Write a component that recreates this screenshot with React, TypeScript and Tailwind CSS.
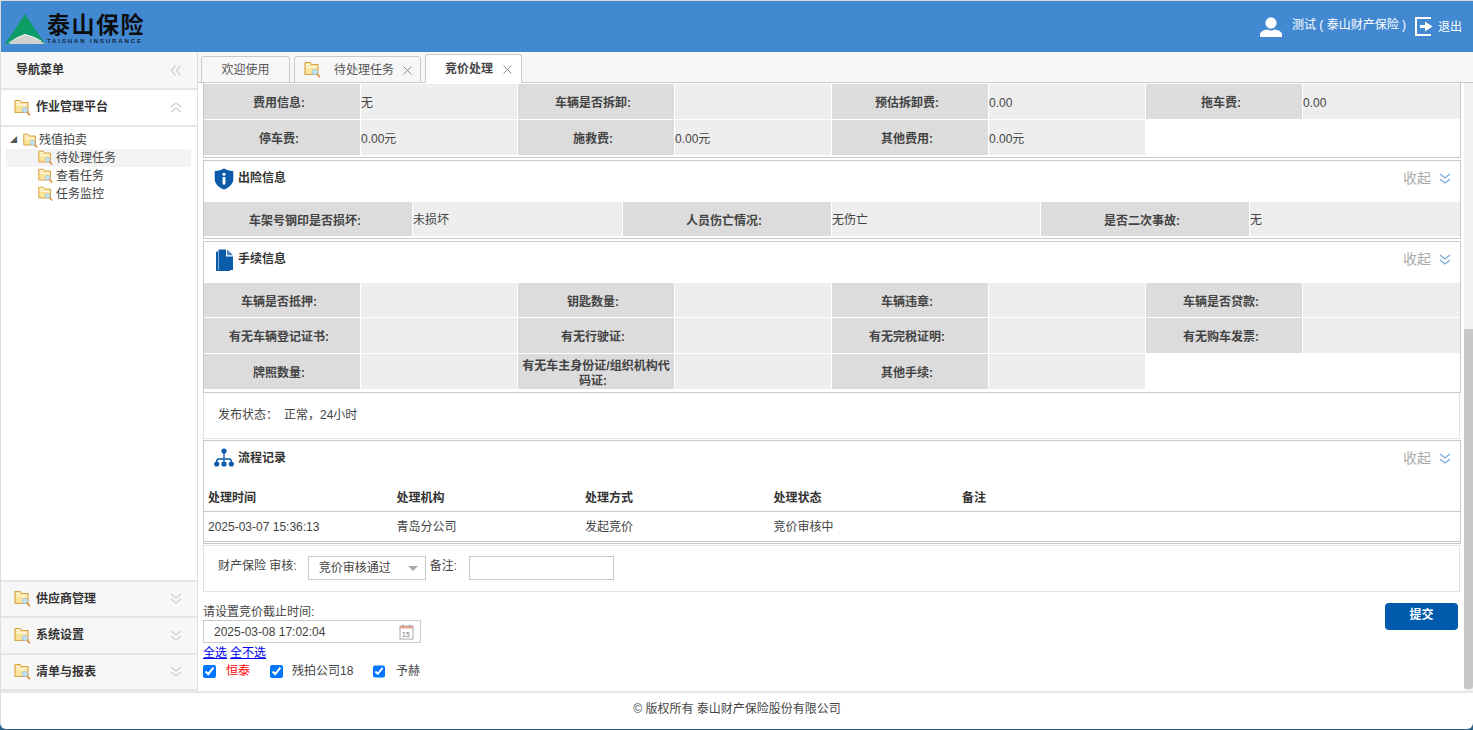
import { X } from 'lucide-react';

const cjk = '"Liberation Sans","Noto Sans CJK SC",sans-serif';

const FolderIcon = ({ className = '' }: { className?: string }) => (
  <svg viewBox="0 0 17 17" className={`w-[17px] h-[17px] shrink-0 ${className}`}>
    <path d="M1 1.500h5l1.500 2H14v10H1z" fill="#fbe39a" stroke="#d9a24a" strokeWidth="1.100" />
    <path d="M2 3.500h4M2.200 6h10.600" stroke="#fff" strokeWidth="1" />
    <circle cx="10.800" cy="11" r="2.700" fill="#bfe3f5" stroke="#a8c2cc" strokeWidth="0.800" />
    <path d="M13 13.200l3 3" stroke="#d98a2b" strokeWidth="1.500" />
  </svg>
);

const Chevrons = ({ dir = 'down', className = '' }: { dir?: 'down' | 'up' | 'left'; className?: string }) => (
  <svg viewBox="0 0 12 11" className={`w-[12px] h-[11px] shrink-0 ${dir === 'up' ? 'rotate-180' : dir === 'left' ? 'rotate-90' : ''} ${className}`}>
    <path d="M1 1l5 4 5-4M1 6l5 4 5-4" fill="none" stroke="currentColor" strokeWidth="1.200" />
  </svg>
);

const ShieldIcon = () => (
  <svg viewBox="0 0 20 22" className="w-[20px] h-[22px]">
    <path d="M10 0.500c2.500 1.600 5.500 2.400 9.300 2.400v8c0 4.800-3.600 8.200-9.300 10.600C4.300 19.100.7 15.700.7 10.900v-8C4.500 2.900 7.500 2.100 10 .5z" fill="#0a5ba8" />
    <rect x="8.600" y="5" width="2.800" height="2.600" fill="#fff" />
    <rect x="8.600" y="9" width="2.800" height="7.500" fill="#fff" />
  </svg>
);

const DocIcon = () => (
  <svg viewBox="0 0 19 23" className="w-[19px] h-[23px]">
    <path d="M2 2.500h1V21h12v1H1V3z" fill="#0a5ba8" />
    <path d="M3.500 0.500H11v7h7V21H3.500z" fill="#0a5ba8" />
    <path d="M12.200 0.500L18 6.300h-5.800z" fill="#3f83c4" />
  </svg>
);

const TreeIcon = () => (
  <svg viewBox="0 0 20 19" className="w-[20px] h-[19px]">
    <g fill="#0a5ba8">
      <circle cx="10" cy="3" r="2.600" />
      <circle cx="2.700" cy="16" r="2.600" />
      <circle cx="10" cy="16" r="2.600" />
      <circle cx="17.300" cy="16" r="2.600" />
    </g>
    <path d="M10 3v13M2.700 16v-2.500q0-2.500 2.500-2.500h9.600q2.500 0 2.500 2.500V16" fill="none" stroke="#0a5ba8" strokeWidth="1.300" />
  </svg>
);

const UserIcon = () => (
  <svg viewBox="0 0 22 20" className="w-[22px] h-[20px]">
    <ellipse cx="11" cy="6" rx="5.600" ry="5.800" fill="#fff" />
    <path d="M0 20v-2.500c0-3 4-4.500 7.500-5 2 1.500 5 1.500 7 0 3.500.5 7.500 2 7.500 5V20z" fill="#fff" />
  </svg>
);

const LogoutIcon = () => (
  <svg viewBox="0 0 18 19" className="w-[18px] h-[19px]">
    <path d="M16 1H1v17h15" fill="none" stroke="#fff" strokeWidth="2" />
    <path d="M5 8h5V4.500L17.500 9.500 10 14.500V11H5z" fill="#fff" />
  </svg>
);

const CalendarIcon = () => (
  <svg viewBox="0 0 15 16" className="w-[15px] h-[16px]">
    <rect x="1" y="2" width="13" height="13" fill="#fff" stroke="#aaa" />
    <path d="M1 2h13v2.500H1z" fill="#e9a48f" />
    <path d="M4 0.500v3M11 0.500v3" stroke="#999" />
    <text x="3" y="12.500" fontSize="7" fill="#777" fontFamily="Liberation Sans">15</text>
  </svg>
);

const Cell = ({ label, value, kind }: { label?: string; value?: string; kind: 'l' | 'v' }) =>
  kind === 'l' ? (
    <div className="bg-[#dcdcdc] pt-[4px] px-[4px] flex items-center justify-center text-center font-bold text-[#444] leading-[15px]">
      <span>
        {label}
        <span className="inline-block w-[6px]" />
      </span>
    </div>
  ) : (
    <div className="bg-[#eeeeee] pt-[2px] flex items-center text-[#444]">{value}</div>
  );

const FourCols = ({ rows, shortFirst }: { rows: [string, string][][]; shortFirst?: boolean }) => (
  <div className="flex flex-col gap-[1px]">
    {rows.map((row, i) => (
      <div key={i} className={`grid grid-cols-[156px_156px_156px_156px_156px_156px_156px_157px] gap-x-[1px] ${shortFirst && i === 0 ? 'h-[34px]' : 'h-[35px]'}`}>
        {row.map(([l, v], j) => [
          <Cell key={`l${j}`} kind="l" label={l} />,
          <Cell key={`v${j}`} kind="v" value={v} />,
        ])}
      </div>
    ))}
  </div>
);

const SectionHead = ({ icon, title, h }: { icon: React.ReactNode; title: string; h: string }) => (
  <div className={`flex items-start ${h}`}>
    <div className="w-[20px] ml-[10px] mt-[7px] flex justify-center">{icon}</div>
    <span className="ml-[4px] mt-[8px] font-bold text-[#333] leading-[18px]">{title}</span>
    <div className="ml-auto mr-[9px] mt-[7px] flex items-center gap-[8px]">
      <span className="text-[14px] text-[#aaaaaa] leading-[20px]">收起</span>
      <Chevrons className="text-[#78a6da]" />
    </div>
  </div>
);

const NavHead = ({ title, bg = 'bg-[#f7f7f7]', open }: { title: string; bg?: string; open?: boolean }) => (
  <div className={`h-[36.5px] flex items-center border-b-2 border-[#e4e6e8] pl-[13px] pr-[15px] ${bg}`}>
    <FolderIcon />
    <span className="ml-[5px] font-bold text-[#333] text-[12px]">{title}</span>
    <Chevrons dir={open ? 'up' : 'down'} className="ml-auto text-[#cfcfcf]" />
  </div>
);

const TreeRow = ({ title, active }: { title: string; active?: boolean }) => (
  <div className={`h-[18px] flex items-center pl-[31px] ${active ? 'bg-[#f3f3f3]' : ''}`}>
    <FolderIcon className="scale-90" />
    <span className="ml-[2px] text-[#444]">{title}</span>
  </div>
);

export default function App() {
  return (
    <div className="h-screen w-full bg-[#2e6288] overflow-hidden text-[12px]" style={{ fontFamily: cjk }}>
      <div className="h-[729px] bg-white rounded-b-[6px] flex flex-col overflow-hidden border-l border-[#dcdcdc]">
        <header className="h-[52px] bg-[#4289d2] border-t border-[#d9d9d9] shrink-0 flex items-center pl-[4px] pr-[11px]">
          <svg viewBox="0 0 40 30" className="w-[40px] h-[30px] mt-[5px]">
            <path d="M20 0L40 30H0z" fill="#0d9b66" />
            <path d="M4 30Q12 23 20 20.500Q30 23 40 30z" fill="#d0d0d0" />
            <path d="M4 29Q12 23 20 20.500Q30 23 36 27" fill="none" stroke="#fff" strokeWidth="1" />
          </svg>
          <div className="ml-[2px] mt-[4px] flex flex-col items-start">
            <span className="text-[23px] leading-[25px] font-bold text-[#0d0d0d] tracking-[1.500px] whitespace-nowrap">泰山保险</span>
            <span className="text-[6px] leading-[7px] font-bold text-[#10243a] tracking-[1.900px] whitespace-nowrap">TAISHAN INSURANCE</span>
          </div>
          <div className="ml-auto flex items-center text-white">
            <UserIcon />
            <span className="ml-[10px] mb-[3px] whitespace-nowrap">测试 ( 泰山财产保险 )</span>
            <span className="ml-[9px]"><LogoutIcon /></span>
            <span className="ml-[5px]">退出</span>
          </div>
        </header>

        <div className="flex-1 flex min-h-0">
          <aside className="w-[197px] shrink-0 border-r border-[#dddddd] flex flex-col">
            <div className="h-[38px] bg-[#f7f7f7] border-b-2 border-[#e4e6e8] flex items-center pl-[15px] pr-[15px]">
              <span className="font-bold text-[#333]">导航菜单</span>
              <Chevrons dir="left" className="ml-auto text-[#c8c8c8]" />
            </div>
            <NavHead title="作业管理平台" bg="bg-white" open />
            <div className="flex-1 pt-[5px] pl-[5px] pr-[6px]">
              <div className="h-[17px] flex items-center">
                <span className="w-[16px] pl-[4px] text-[#555] text-[7px]">◢</span>
                <FolderIcon className="scale-90" />
                <span className="text-[#444]">残值拍卖</span>
              </div>
              <TreeRow title="待处理任务" active />
              <TreeRow title="查看任务" />
              <TreeRow title="任务监控" />
            </div>
            <div className="border-t-2 border-[#e4e6e8]">
              <NavHead title="供应商管理" />
              <NavHead title="系统设置" />
              <NavHead title="清单与报表" />
            </div>
          </aside>

          <main className="flex-1 min-w-0 flex flex-col bg-white">
            <div className="h-[31px] shrink-0 bg-[#f7f7f7] flex items-end pl-[3px] border-b border-[#c9c9c9]">
              <div className="w-[89px] h-[27px] -mb-[1px] border border-[#c9c9c9] rounded-t-[3px] flex items-center justify-center text-[#555] bg-[#f7f7f7]">欢迎使用</div>
              <div className="ml-[4px] w-[127px] h-[27px] -mb-[1px] border border-[#c9c9c9] rounded-t-[3px] flex items-center pl-[9px] text-[#555] bg-[#f7f7f7]">
                <FolderIcon />
                <span className="ml-[13px]">待处理任务</span>
                <X size={15} strokeWidth={1.5} className="ml-[6px] mt-[2px] text-[#888]" />
              </div>
              <div className="ml-[4px] w-[97px] h-[29px] -mb-[1px] border border-[#c9c9c9] border-b-white rounded-t-[3px] flex items-center pl-[19px] bg-white font-bold text-[#444]">
                竞价处理
                <X size={15} strokeWidth={1.5} className="ml-[7px] mt-[2px] text-[#888]" />
              </div>
            </div>

            <div className="flex-1 min-h-0 flex">
              <div className="flex-1 min-w-0 pl-[5px] pr-[3px] flex flex-col">
                <div className="border-x border-b border-[#c9c9c9] pt-[1px] pb-[2px] h-[75px]">
                  <FourCols
                    rows={[
                      [['费用信息:', '无'], ['车辆是否拆卸:', ''], ['预估拆卸费:', '0.00'], ['拖车费:', '0.00']],
                      [['停车费:', '0.00元'], ['施救费:', '0.00元'], ['其他费用:', '0.00元']],
                    ]}
                  />
                </div>

                <section className="mt-[2px] border border-[#c9c9c9] h-[79px]">
                  <SectionHead icon={<ShieldIcon />} title="出险信息" h="h-[41px]" />
                  <div className="grid grid-cols-[208px_209px_208px_208px_208px_210px] gap-x-[1px] h-[34px]">
                    <Cell kind="l" label="车架号钢印是否损坏:" />
                    <Cell kind="v" value="未损坏" />
                    <Cell kind="l" label="人员伤亡情况:" />
                    <Cell kind="v" value="无伤亡" />
                    <Cell kind="l" label="是否二次事故:" />
                    <Cell kind="v" value="无" />
                  </div>
                </section>

                <section className="mt-[2px] border border-[#c9c9c9] h-[152px]">
                  <SectionHead icon={<DocIcon />} title="手续信息" h="h-[41px]" />
                  <FourCols
                    shortFirst
                    rows={[
                      [['车辆是否抵押:', ''], ['钥匙数量:', ''], ['车辆违章:', ''], ['车辆是否贷款:', '']],
                      [['有无车辆登记证书:', ''], ['有无行驶证:', ''], ['有无完税证明:', ''], ['有无购车发票:', '']],
                      [['牌照数量:', ''], ['有无车主身份证/组织机构代码证:', ''], ['其他手续:', '']],
                    ]}
                  />
                </section>

                <div className="border border-t-0 border-[#e2e2e2] h-[46px] pl-[14px] pt-[13px] text-[#444] mr-[1px]">
                  发布状态：<span className="ml-[6px]">正常，24小时</span>
                </div>

                <section className="mt-[1px] border border-[#c9c9c9] h-[104px]">
                  <SectionHead icon={<TreeIcon />} title="流程记录" h="h-[44px]" />
                  <div className="grid grid-cols-[188.5px_188.5px_188.5px_188.5px_1fr] h-[27px] items-center border-b border-[#c9c9c9] pl-[4px] font-bold text-[#333]">
                    <span>处理时间</span>
                    <span>处理机构</span>
                    <span>处理方式</span>
                    <span>处理状态</span>
                    <span>备注</span>
                  </div>
                  <div className="grid grid-cols-[188.5px_188.5px_188.5px_188.5px_1fr] h-[30px] items-center border-b border-[#c9c9c9] pl-[4px] text-[#444]">
                    <span>2025-03-07 15:36:13</span>
                    <span>青岛分公司</span>
                    <span>发起竞价</span>
                    <span>竞价审核中</span>
                    <span />
                  </div>
                </section>

                <div className="mt-[1px] border border-[#e2e2e2] h-[47px] flex items-start pl-[14px] pt-[10px] text-[#444] mr-[1px]">
                  <span className="mt-[1px]">财产保险 审核:</span>
                  <div className="ml-[11px] w-[118px] h-[24px] border border-[#c9c9c9] flex items-center pl-[10px] pr-[7px]">
                    竞价审核通过
                    <span className="ml-auto w-0 h-0 border-x-[5px] border-x-transparent border-t-[5px] border-t-[#aaa]" />
                  </div>
                  <span className="ml-[4px] mt-[1px]">备注:</span>
                  <div className="ml-[12px] w-[145px] h-[24px] border border-[#c9c9c9]" />
                </div>

                <div className="flex justify-between pr-[3px]">
                  <div className="pt-[12px]">
                    <div className="h-[16px] leading-[16px] text-[#444]">请设置竞价截止时间:</div>
                    <div className="w-[218px] h-[23px] border border-[#c9c9c9] flex items-center pl-[10px] pr-[6px] text-[#444]">
                      2025-03-08 17:02:04
                      <span className="ml-auto flex"><CalendarIcon /></span>
                    </div>
                    <div className="h-[18px] leading-[20px] text-[#0000ee] flex gap-[3px]">
                      <span className="underline">全选</span>
                      <span className="underline">全不选</span>
                    </div>
                    <div className="flex items-center h-[20px] text-[#444]">
                      <input type="checkbox" defaultChecked className="w-[13px] h-[13px] m-0" />
                      <span className="ml-[10px] w-[44px] text-[#ff0000]">恒泰</span>
                      <input type="checkbox" defaultChecked className="w-[13px] h-[13px] m-0" />
                      <span className="ml-[9px] w-[81px]">残拍公司18</span>
                      <input type="checkbox" defaultChecked className="w-[12px] h-[13px] m-0" />
                      <span className="ml-[11px]">予赫</span>
                    </div>
                  </div>
                  <button className="mt-[11px] w-[73px] h-[27px] pb-[3px] rounded-[4px] bg-[#005bac] text-white font-bold">提交</button>
                </div>
              </div>

              <div className="w-[9px] shrink-0 bg-[#f1f1f1] flex flex-col justify-end pb-[2px]">
                <div className="h-[360px] bg-[#c8c8cb] rounded-b-[3px]" />
              </div>
            </div>
          </main>
        </div>

        <footer className="h-[38px] shrink-0 border-t-2 border-[#e4e6e8] pb-[5px] flex items-center justify-center text-[#444]">© 版权所有 泰山财产保险股份有限公司</footer>
      </div>
    </div>
  );
}
